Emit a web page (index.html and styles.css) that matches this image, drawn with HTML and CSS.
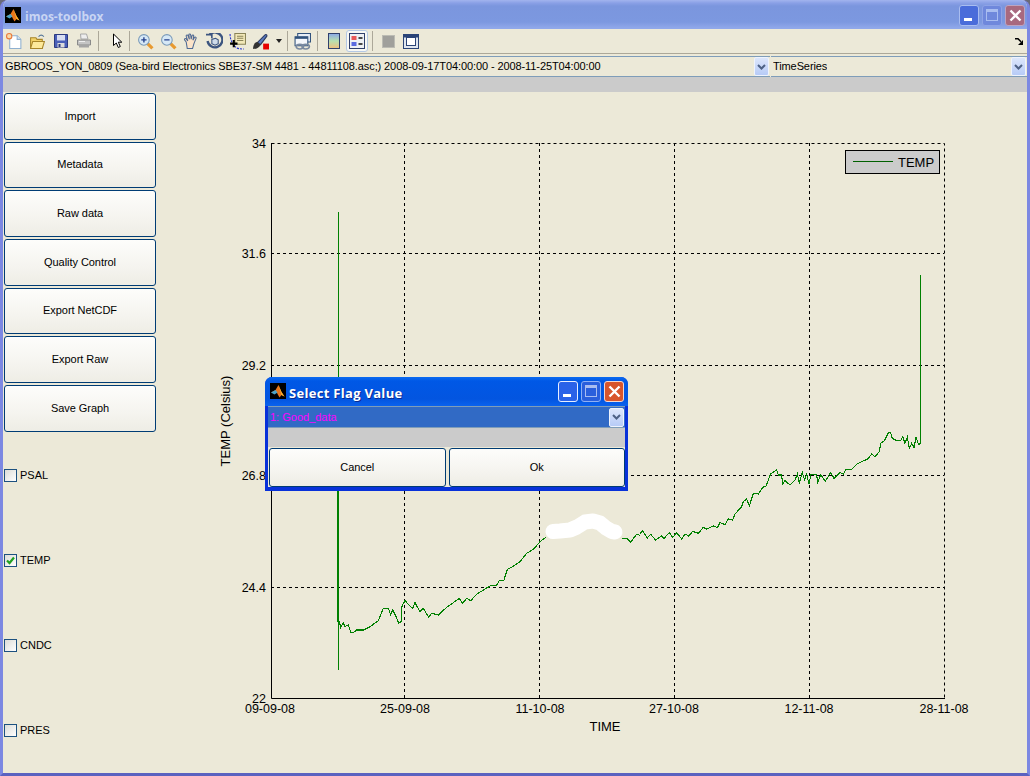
FILE: index.html
```html
<!DOCTYPE html>
<html lang="en">
<head>
<meta charset="utf-8">
<title>imos-toolbox</title>
<link rel="stylesheet" href="styles.css">
</head>
<body>
<svg class="defs" width="0" height="0" aria-hidden="true">
  <defs>
    <symbol id="logo" viewBox="0 0 16 16">
      <rect width="16" height="16" fill="#000"/>
      <path d="M1 9.500 5.500 7l3-5 3 7 3 4.500-3-1.500-2 2.500-2.500-4.500z" fill="#e8761c"/>
      <path d="M1 9.500 5.500 7l2 2.500-3 2z" fill="#4aa3c8"/>
      <path d="M8.500 2 11.500 9l3 4.500-3-1.500z" fill="#f7b52c"/>
    </symbol>
    <symbol id="chev" viewBox="0 0 9 6">
      <path d="M1 1 4.500 4.500 8 1" fill="none" stroke="#4d6185" stroke-width="2"/>
    </symbol>
  </defs>
</svg>

<div class="win">
  <header class="title">
    <svg class="logo"><use href="#logo"/></svg>
    <span class="title-text">imos-toolbox</span>
    <div class="caps">
      <span class="cap cap-min"><i class="min-bar"></i></span>
      <span class="cap cap-max"><i class="max-box"></i></span>
      <span class="cap cap-close">
        <svg width="13" height="13" viewBox="0 0 13 13"><path d="M1.500 1.500 11.500 11.500M11.500 1.500 1.500 11.500" stroke="#fff" stroke-width="2.400"/></svg>
      </span>
    </div>
  </header>

  <div class="toolbar">
    <span class="ic"><svg width="17" height="17" viewBox="0 0 16 16"><path d="M3.500 2.500h7l3.500 3.500v8.500h-10.500z" fill="#fff" stroke="#8fb0d0"/><path d="M10.500 2.500v3.500h3.500" fill="#dbe8f5" stroke="#8fb0d0"/><circle cx="3" cy="3" r="2.500" fill="#f7d9a8" stroke="#ea7a3c"/></svg></span>
    <span class="ic"><svg width="17" height="17" viewBox="0 0 16 16"><path d="M1.500 4.500h5l1 1.500h5v8.500h-11z" fill="#f3d268" stroke="#a8862a"/><path d="M1.500 14.500 3.500 8h11l-2 6.500z" fill="#fde99a" stroke="#a8862a"/><path d="M9 3.500c1.500-2 3.500-2 5 0" fill="none" stroke="#5a7a9a"/></svg></span>
    <span class="ic"><svg width="16" height="16" viewBox="0 0 16 16"><path d="M1.500 1.500h13v13h-13z" fill="#4a5fb8" stroke="#2c3a80"/><rect x="4" y="2" width="8" height="5.500" fill="#d8def2"/><rect x="4.500" y="10" width="7" height="4.500" fill="#dcdcdc"/><rect x="5.500" y="11" width="2" height="3" fill="#2c3a80"/></svg></span>
    <span class="ic"><svg width="16" height="16" viewBox="0 0 16 16"><path d="M4.500 1h6l1.500 5h-7z" fill="#eeeeee" stroke="#a8a8a8"/><path d="M1.500 7h13v5h-13z" fill="#c4c4c4" stroke="#8a8a8a"/><path d="M3 12h10v2.500h-10z" fill="#a4a4a4"/><path d="M3 8.500h6" stroke="#eee"/></svg></span>
    <i class="sep sep-a"></i>
    <span class="ic"><svg width="16" height="16" viewBox="0 0 16 16"><path d="M4.500 1v11.500l2.800-2.500 2 4.500 2-1-2-4.300h3.500z" fill="#fff" stroke="#000"/></svg></span>
    <i class="sep sep-b"></i>
    <span class="ic"><svg width="17" height="17" viewBox="0 0 16 16"><path d="M10 10l4.500 4.500" stroke="#e89a30" stroke-width="3"/><circle cx="6.500" cy="6.500" r="5" fill="#d6e8f6" stroke="#7a9ab8"/><path d="M4 6.500h5M6.500 4v5" stroke="#24408c" stroke-width="1.300"/></svg></span>
    <span class="ic"><svg width="17" height="17" viewBox="0 0 16 16"><path d="M10 10l4.500 4.500" stroke="#e89a30" stroke-width="3"/><circle cx="6.500" cy="6.500" r="5" fill="#d6e8f6" stroke="#7a9ab8"/><path d="M4 6.500h5" stroke="#24408c" stroke-width="1.300"/></svg></span>
    <span class="ic"><svg width="17" height="17" viewBox="0 0 16 16"><path d="M3 8.500 1.500 6.500c-.6-1 .8-1.800 1.500-1l1.500 2-1.500-4.500c-.3-1.200 1.300-1.600 1.700-.5l1.300 3.500-.5-4.200c-.1-1.200 1.600-1.200 1.700 0l.5 4 .8-3.300c.3-1.100 1.800-.8 1.600.4l-.8 3.800 1.500-2.400c.6-1 2-.3 1.500.8l-2 4.900-1.300 4.500h-5z" fill="#fbe3c8" stroke="#4f6a94"/></svg></span>
    <span class="ic"><svg width="17" height="17" viewBox="0 0 16 16"><path d="M3.500 1.500a7 7 0 1 1-2 6" fill="none" stroke="#3c5580" stroke-width="2.200"/><path d="M0 1.500h5.500v3.500" fill="none" stroke="#3c5580" stroke-width="1.500"/><path d="M5.500 6 9 5l2.500 1.500v3.500l-3 1.500-3-1.500z" fill="#cfdcea" stroke="#3c5580"/></svg></span>
    <span class="ic"><svg width="17" height="17" viewBox="0 0 16 16"><path d="M5.500.5h10v10h-10z" fill="#f2e8b8" stroke="#8a8458"/><path d="M7.500 3h6M7.500 5h6M7.500 7h6" stroke="#8a8458"/><path d="M1 1c0 5 2 9 5 12 2 2 5 2 8 2" fill="none" stroke="#2030d0" stroke-dasharray="2 1"/><path d="M4.500 6.500v7M1 10h7" stroke="#000" stroke-width="2"/></svg></span>
    <span class="ic"><svg width="17" height="17" viewBox="0 0 16 16"><path d="M5 9 12 2c1-1 2.500-.5 2 1L8 11z" fill="#5a7ac0" stroke="#2c3a60"/><path d="M1 15c0-3 1-6 4-6.500l3 2.500c-1 3-4 4-7 4z" fill="#333"/><rect x="10.500" y="10" width="5.500" height="5.500" fill="#e60000"/></svg></span>
    <i class="drop"></i>
    <i class="sep sep-c"></i>
    <span class="ic"><svg width="17" height="17" viewBox="0 0 16 16"><path d="M3.500.5h12v8h-12z" fill="#e8eef6" stroke="#30527c"/><path d="M1 3.500h12v8.500h-12z" fill="#f4f7fb" stroke="#30527c"/><path d="M1 3.500h12v2h-12z" fill="#30527c"/><ellipse cx="5.500" cy="12.800" rx="3.500" ry="2.200" fill="none" stroke="#7a8aa0" stroke-width="1.500"/><ellipse cx="11" cy="12.800" rx="3.500" ry="2.200" fill="none" stroke="#7a8aa0" stroke-width="1.500"/></svg></span>
    <i class="sep sep-d"></i>
    <span class="ic"><svg width="16" height="16" viewBox="0 0 12 16" class="ic-bar"><defs><linearGradient id="cb" x1="0" y1="0" x2="0" y2="1"><stop offset="0" stop-color="#8aa8e8"/><stop offset=".5" stop-color="#b8e0b0"/><stop offset="1" stop-color="#f0c080"/></linearGradient></defs><rect x=".5" y=".5" width="11" height="15" fill="url(#cb)" stroke="#30406c"/></svg></span>
    <span class="press"><svg width="16" height="16" viewBox="0 0 16 16"><rect x=".5" y=".5" width="15" height="15" fill="#eef0f4" stroke="#30406c"/><rect x="2.500" y="3" width="5" height="4" fill="#e85858"/><rect x="2.500" y="9" width="5" height="4" fill="#5a6ae0"/><path d="M9.500 5h4M9.500 11h4" stroke="#111" stroke-width="1.300"/></svg></span>
    <i class="sep sep-e"></i>
    <span class="ic"><svg width="13" height="13" viewBox="0 0 13 13"><rect x=".5" y=".5" width="12" height="12" fill="#a0a09c" stroke="#bcbcb4"/></svg></span>
    <span class="ic ic-last"><svg width="16" height="15" viewBox="0 0 16 15"><rect x=".5" y=".5" width="15" height="14" fill="#dfe6f0" stroke="#2a4478"/><rect x="1" y="1" width="14" height="2.500" fill="#2a4478"/><rect x="3.500" y="3.500" width="9" height="8" fill="#fff" stroke="#2a4478"/></svg></span>
    <span class="corner"><svg width="8" height="7" viewBox="0 0 8 7"><path d="M0 .8h3l3 3" fill="none" stroke="#000" stroke-width="1.500"/><path d="M8 2v5H3z" fill="#000"/></svg></span>
  </div>

  <div class="combos">
    <div class="combo combo-file">
      <span class="combo-text">GBROOS_YON_0809 (Sea-bird Electronics SBE37-SM 4481 - 44811108.asc;) 2008-09-17T04:00:00 - 2008-11-25T04:00:00</span>
      <span class="combo-btn"><svg width="9" height="6"><use href="#chev"/></svg></span>
    </div>
    <div class="combo combo-mode">
      <span class="combo-text">TimeSeries</span>
      <span class="combo-btn"><svg width="9" height="6"><use href="#chev"/></svg></span>
    </div>
  </div>
  <div class="strip"></div>

  <main class="body">
    <aside class="side">
      <div class="btns">
        <button class="btn" type="button">Import</button>
        <button class="btn" type="button">Metadata</button>
        <button class="btn" type="button">Raw data</button>
        <button class="btn" type="button">Quality Control</button>
        <button class="btn" type="button">Export NetCDF</button>
        <button class="btn" type="button">Export Raw</button>
        <button class="btn" type="button">Save Graph</button>
      </div>
      <div class="checks">
        <div class="chk"><span class="box"></span>PSAL</div>
        <div class="chk"><span class="box"><svg width="11" height="11" viewBox="0 0 11 11"><path d="M2 5.500 4.500 8 9 2.500" fill="none" stroke="#21a121" stroke-width="2.200"/></svg></span>TEMP</div>
        <div class="chk"><span class="box"></span>CNDC</div>
        <div class="chk"><span class="box"></span>PRES</div>
      </div>
    </aside>

    <svg class="plot" width="867" height="681" viewBox="160 92 867 681">
      <g class="grid">
        <path d="M271.500 143.500H944.500V698"/>
        <path d="M404.500 143V698M539.500 143V698M674.500 143V698M809.500 143V698"/>
        <path d="M271 253.500H944M271 365.500H944M271 475.500H944M271 587.500H944"/>
      </g>
      <path class="spine" d="M271.500 143V698.500H945"/>
      <g class="yt">
        <text x="266" y="148">34</text>
        <text x="266" y="258">31.6</text>
        <text x="266" y="370">29.2</text>
        <text x="266" y="480">26.8</text>
        <text x="266" y="592">24.4</text>
        <text x="266" y="703">22</text>
      </g>
      <g class="xt">
        <text x="270" y="713">09-09-08</text>
        <text x="405" y="713">25-09-08</text>
        <text x="540" y="713">11-10-08</text>
        <text x="674" y="713">27-10-08</text>
        <text x="809" y="713">12-11-08</text>
        <text x="944" y="713">28-11-08</text>
      </g>
      <text class="axl" x="605" y="731">TIME</text>
      <text class="axl" transform="translate(230 421) rotate(-90)">TEMP (Celsius)</text>

      <path class="tr tr-spike" d="M338.500 212V670"/>
      <path class="tr tr-thick" d="M338 490V621"/>
      <g transform="translate(320 500) scale(.33333)">
        <polyline class="tr tr3" points="52,365 58,365 62,382 70,368 75,380 85,374 92,396 100,398 110,390 130,390 150,380 175,362 190,325 205,325 212,345 218,330 228,350 236,370 243,365 246,318 255,302 270,318 278,325 285,308 300,335 310,325 326,352 335,340 355,345 380,322 400,308 418,295 428,310 440,295 452,302 470,283 490,270 510,258 530,255 538,242 552,240 562,208 578,200 600,185 620,160 640,148 660,125 677,112"/>
        <polyline class="tr tr3" points="905,115 920,115 932,126 950,103 960,106"/>
      </g>
      <polyline class="blob" points="553,531.500 560,531 570,530 577,527 585,522 593,521 600,523 606,528 612,531.500 615,532"/>
      <g transform="translate(640 420) scale(.33333)">
        <polyline class="tr tr3" points="0,340 8,332 22,354 32,343 47,360 65,348 72,355 88,338 98,353 110,338 125,357 135,342 146,348 158,334 175,340 190,322 200,327 220,318 232,323 240,308 255,314 265,297 278,300 285,282 305,260 310,245 320,237 328,258 340,220 355,222 368,202 378,198 392,162 410,150 415,165 425,165 428,192 435,182 450,195 465,180 472,162 478,188 487,158 494,180 500,162 507,192 513,162 530,165 533,187 542,165 556,183 572,158 582,175 600,157 610,163 618,148 635,148 650,133 665,125 683,117 695,102 705,110 718,95 722,70 733,62 745,38 752,38 757,55 770,62 782,62 788,50 795,70 802,52 808,85 815,70 822,82 828,52 835,72 841,72"/>
      </g>
      <path class="tr" d="M920.500 275V444"/>

      <rect class="lg" x="845.500" y="150.500" width="94" height="23"/>
      <path class="tr tr-key" d="M853 161.500H893"/>
      <text class="lgt" x="898" y="167">TEMP</text>
    </svg>
  </main>

  <section class="dlg">
    <header class="dlg-title">
      <svg class="logo"><use href="#logo"/></svg>
      <span class="dlg-text">Select Flag Value</span>
      <div class="caps caps-dlg">
        <span class="cap dcap-min"><i class="min-bar"></i></span>
        <span class="cap dcap-max"><i class="max-box"></i></span>
        <span class="cap dcap-close">
          <svg width="13" height="13" viewBox="0 0 13 13"><path d="M1.500 1.500 11.500 11.500M11.500 1.500 1.500 11.500" stroke="#fff" stroke-width="2.400"/></svg>
        </span>
      </div>
    </header>
    <div class="dlg-body">
      <div class="dlg-combo">
        <span class="dlg-val">1: Good_data</span>
        <span class="combo-btn dlg-btn"><svg width="9" height="6"><use href="#chev"/></svg></span>
      </div>
      <div class="dlg-strip"></div>
      <div class="dlg-actions">
        <button class="btn" type="button">Cancel</button>
        <button class="btn" type="button">Ok</button>
      </div>
    </div>
  </section>
</div>
</body>
</html>
```
FILE: styles.css
```css
* { box-sizing: border-box; }
html, body { margin: 0; height: 100%; overflow: hidden; background: #6a6a78; }
.defs { position: absolute; }
.win {
  position: relative;
  width: 1030px;
  height: 776px;
  display: flex;
  flex-direction: column;
  background: #ece9d8;
  border: 3px solid #7c88e2;
  border-top: 0;
  border-bottom-color: #5a62c0;
  border-radius: 8px 8px 0 0;
  font: 11px "Liberation Sans", Arial, sans-serif;
  color: #000;
  overflow: hidden;
}
.title {
  flex: 0 0 29px;
  margin: 0 -3px;
  display: flex;
  align-items: center;
  padding: 1px 0 0 5px;
  background: linear-gradient(#a2b4ee 0, #8aa0e6 3px, #7b96de 6px, #7c98e0 22px, #90a8ea 28px);
}
.logo { width: 16px; height: 16px; flex: none; }
.title-text {
  margin: 2px 0 0 4px;
  font: bold 12px "Open Sans", sans-serif;
  color: #c9d5f3;
}
.caps { margin-left: auto; margin-right: 5px; display: flex; gap: 3px; }
.cap {
  width: 20px;
  height: 21px;
  display: flex;
  align-items: center;
  justify-content: center;
  border: 1px solid #a9bdf0;
  border-radius: 3px;
  position: relative;
}
.cap-min { background: #4a6cda; }
.cap-max { background: #6f88dc; border-color: #8ea3e6; }
.cap-close { background: #a8697f; border-color: #bda4c0; }
.min-bar { position: absolute; left: 4px; bottom: 4px; width: 8px; height: 3px; background: #fff; }
.max-box { width: 12px; height: 12px; border: 1px solid #a9bdf0; border-top-width: 3px; }
.toolbar {
  flex: 0 0 25px;
  display: flex;
  align-items: center;
  background: #ece9d8;
  border-bottom: 1px solid #aca899;
}
.ic { flex: 0 0 23px; height: 20px; display: flex; align-items: center; justify-content: center; }
.ic-bar { width: 12px; }
.ic-last { margin-left: -1px; }
.sep { flex: none; width: 1px; height: 20px; background: #aca899; }
.sep-a { margin: 0 6px 0 3px; }
.sep-b { margin: 0 4px 0 1px; }
.sep-c { margin: 0 3px 0 5px; }
.sep-d { margin: 0 4px 0 3px; }
.sep-e { margin: 0 4px 0 4px; }
.drop {
  flex: none;
  width: 0;
  height: 0;
  margin-left: 4px;
  border: 3px solid transparent;
  border-top: 4px solid #222;
  border-bottom: 0;
}
.press {
  flex: none;
  width: 22px;
  height: 22px;
  margin-left: 1px;
  display: flex;
  align-items: center;
  justify-content: center;
  background: #f8f8f4;
  border: 1px solid #b4c8e4;
  border-radius: 3px;
}
.corner { margin-left: auto; margin-right: 4px; display: flex; }
.combos { flex: 0 0 21px; display: flex; margin-top: 2px; gap: 1px; }
.combo {
  display: flex;
  align-items: center;
  justify-content: space-between;
  background: #ece9d8;
  border: 1px solid #7f9db9;
  border-width: 1px 0;
  padding-left: 2px;
  font-size: 11px;
}
.combo-file { flex: 0 0 767px; }
.combo-mode { flex: 1; }
.combo-text { white-space: nowrap; overflow: hidden; letter-spacing: -.1px; margin-bottom: 2px; }
.combo-btn {
  flex: 0 0 15px;
  height: 19px;
  margin-right: 1px;
  display: flex;
  align-items: center;
  justify-content: center;
  background: linear-gradient(#dce6fb, #b7cbf7);
  border: 1px solid #eef3fd;
  border-radius: 2px;
}
.strip { flex: 0 0 15px; background: #cbcbcb; }
.body { flex: 1; display: flex; min-height: 0; }
.side { flex: 0 0 157px; padding: 1px 0 0 1px; display: flex; flex-direction: column; }
.btns { display: flex; flex-direction: column; gap: 2px; width: 152px; }
.btn {
  height: 46.660px;
  padding: 0 0 1px;
  font: 11px "Liberation Sans", Arial, sans-serif;
  letter-spacing: -.05px;
  color: #000;
  background: linear-gradient(#fdfdfb, #f5f4ef 60%, #eeede5);
  border: 1px solid #003c74;
  border-radius: 3px;
}
.checks { margin-top: 37px; display: flex; flex-direction: column; gap: 72px; }
.chk { height: 13px; display: flex; align-items: center; gap: 3px; line-height: 13px; }
.box {
  flex: none;
  width: 13px;
  height: 13px;
  display: flex;
  background: linear-gradient(135deg, #dcdcd7, #fff);
  border: 1px solid #1c5180;
}
.plot { flex: none; display: block; }
.grid path { fill: none; stroke: #000; stroke-dasharray: 3 3; }
.spine { fill: none; stroke: #000; }
.yt text, .xt text, .axl, .lgt { font-family: "Liberation Sans", Arial, sans-serif; fill: #000; }
.yt text { font-size: 12.500px; text-anchor: end; }
.xt text { font-size: 12.500px; text-anchor: middle; }
.axl { font-size: 13px; text-anchor: middle; }
.lgt { font-size: 13px; }
.tr { fill: none; stroke: #008000; stroke-width: 1; }
.tr3 { stroke-width: 3.300; shape-rendering: crispEdges; }
.tr-thick { stroke-width: 2; }
.tr-key { stroke: #006000; }
.blob { fill: none; stroke: #fff; stroke-width: 15; stroke-linecap: round; stroke-linejoin: round; }
.lg { fill: #cbcbcb; stroke: #000; }
.dlg {
  position: absolute;
  left: 262px;
  top: 377px;
  width: 363px;
  height: 114px;
  display: flex;
  flex-direction: column;
  background: #0831d9;
  border-radius: 7px 7px 0 0;
}
.dlg-title {
  flex: 0 0 29px;
  display: flex;
  align-items: center;
  padding: 0 0 1px 5px;
  background: linear-gradient(#0a6af0 0, #0058e6 4px, #0355e0 22px, #0a62ee 29px);
  border-radius: 7px 7px 0 0;
}
.dlg-text {
  margin: 3px 0 0 3px;
  font: bold 13px "Open Sans", sans-serif;
  color: #fff;
  letter-spacing: .3px;
  text-shadow: 1px 1px 0 #0a2a90;
}
.caps-dlg { margin-right: 4px; }
.dcap-min { background: #2a62e8; border-color: #e6eeff; }
.dcap-max { background: #2a5fdc; border-color: #8fb0f4; }
.dcap-close { background: #d8552c; border-color: #f4d8d0; }
.dlg-body {
  flex: 1;
  margin: 0 3px 4px;
  display: flex;
  flex-direction: column;
  background: #ece9d8;
}
.dlg-combo {
  flex: 0 0 22px;
  display: flex;
  align-items: center;
  justify-content: space-between;
  padding-left: 2px;
  background: #316ac5;
  border: 1px solid #7f9db9;
  border-width: 1px 0;
}
.dlg-val { color: #ff00ff; font-size: 11px; }
.dlg-strip { flex: 0 0 19px; background: #cbcbcb; }
.dlg-actions { flex: 1; display: flex; gap: 3px; padding: 1px 0 0 1px; }
.dlg-actions .btn { flex: 1; height: auto; }
```
